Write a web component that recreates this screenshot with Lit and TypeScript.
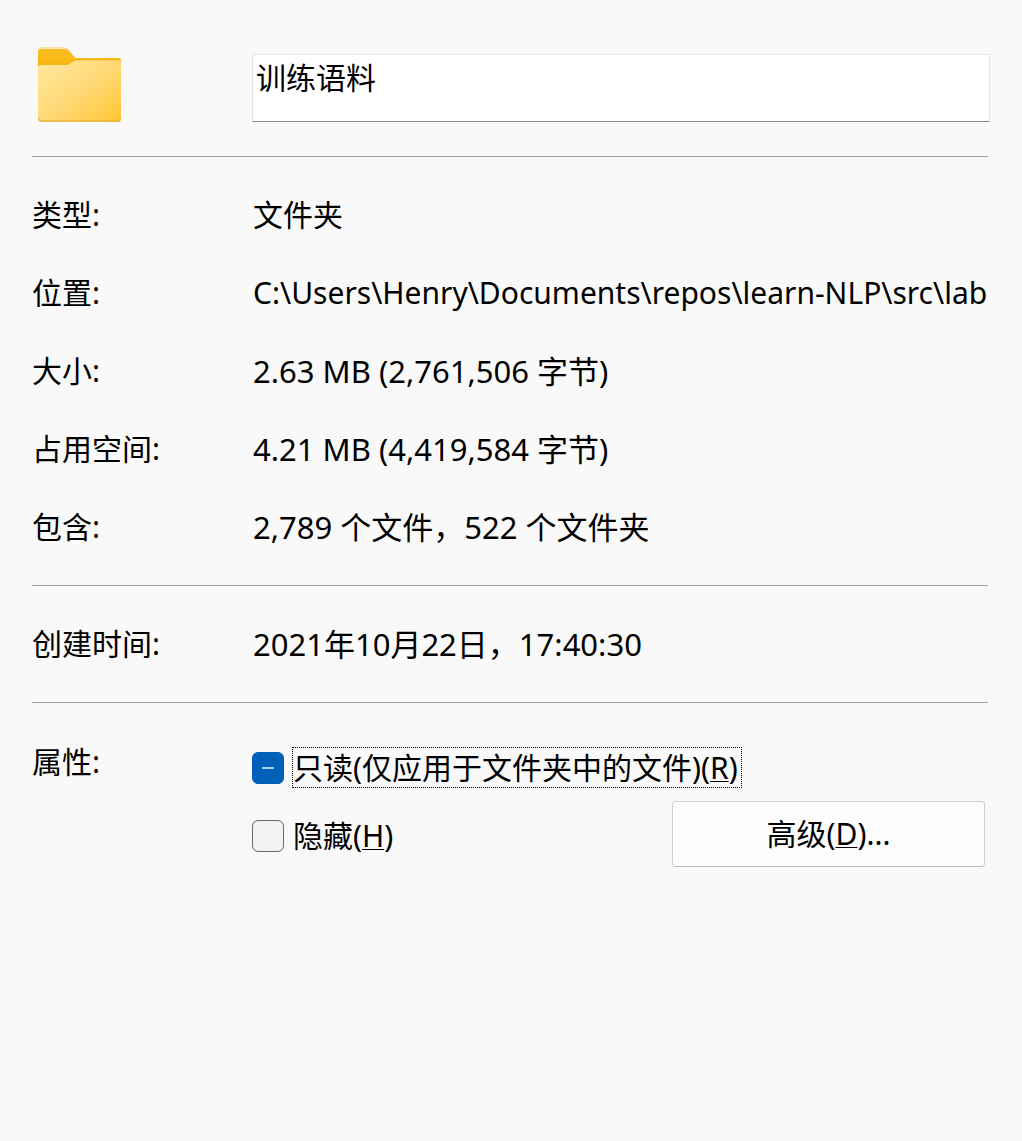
import { LitElement, html, css, svg } from "lit";
import { customElement, property, state } from "lit/decorators.js";
import { classMap } from "lit/directives/class-map.js";

interface Detail {
  label: string;
  value: string;
  numeric?: boolean;
}

const SUMMARY: Detail[] = [
  { label: "类型:", value: "文件夹" },
  { label: "位置:", value: "C:\\Users\\Henry\\Documents\\repos\\learn-NLP\\src\\lab" },
  { label: "大小:", value: "2.63 MB (2,761,506 字节)", numeric: true },
  { label: "占用空间:", value: "4.21 MB (4,419,584 字节)", numeric: true },
  { label: "包含:", value: "2,789 个文件，522 个文件夹", numeric: true },
];

const TIMES: Detail[] = [
  { label: "创建时间:", value: "2021年10月22日，17:40:30", numeric: true },
];

@customElement("folder-icon")
class FolderIcon extends LitElement {
  static styles = css`
    :host {
      display: block;
    }
    .icon {
      display: block;
      width: 84px;
      height: 75px;
    }
  `;

  render() {
    return html`
      <svg class="icon" viewBox="0 0 84 75" aria-hidden="true">
        ${svg`
          <defs>
            <linearGradient id="front" x1="0" y1="0" x2="1" y2="1">
              <stop offset="0" stop-color="#ffe8a0" />
              <stop offset="0.5" stop-color="#ffd976" />
              <stop offset="1" stop-color="#ffc734" />
            </linearGradient>
            <linearGradient id="tab" x1="0" y1="0" x2="0" y2="1">
              <stop offset="0" stop-color="#fbbc20" />
              <stop offset="0.5" stop-color="#f8b816" />
              <stop offset="0.7" stop-color="#e3a412" />
            </linearGradient>
          </defs>
          <path d="M0 4Q0 0 3 0H25Q28 0 30 2L38 11H80Q83 11 83 14V30H0Z" fill="#f7e2b0" />
          <path d="M0 5Q0 2 3 2H25Q28 2 30 3L37 11H80Q83 11 83 14V30H0Z" fill="url(#tab)" />
          <path d="M0 21Q0 18 3 18H27Q31 18 34 15.500Q36 13 40 13H80Q83 13 83 16V72Q83 75 80 75H3Q0 75 0 72Z" fill="url(#front)" />
          <path d="M38 13.500H80Q82 13.500 82.500 16" fill="none" stroke="#fccb58" />
          <path d="M0.500 71Q1 74 3 74.200H80Q82 74 82.500 71" fill="none" stroke="#e5b03a" stroke-width="1.200" />
        `}
      </svg>
    `;
  }
}

@customElement("detail-list")
class DetailList extends LitElement {
  @property({ attribute: false }) items: Detail[] = [];

  static styles = css`
    :host {
      display: block;
    }
    .list {
      margin: 0;
    }
    .row {
      display: grid;
      grid-template-columns: 220px minmax(0, 1fr);
      align-items: center;
      height: 78px;
      line-height: 40px;
    }
    .value {
      margin: 0;
      padding-left: 1px;
      white-space: nowrap;
      overflow: hidden;
    }
    .numeric {
      font-size: 31px;
    }
  `;

  render() {
    return html`
      <dl class="list">
        ${this.items.map(
          (item) => html`
            <div class="row">
              <dt>${item.label}</dt>
              <dd class=${classMap({ value: true, numeric: !!item.numeric })}>${item.value}</dd>
            </div>
          `
        )}
      </dl>
    `;
  }
}

@customElement("app-root")
class AppRoot extends LitElement {
  @state() private folderName = "训练语料";

  static styles = css`
    :host {
      display: block;
      box-sizing: border-box;
      min-height: 100vh;
      padding: 54px 32px 32px;
      background: #f9f9f9;
      color: #000;
      font-family: "Noto Sans", "Noto Sans CJK SC", sans-serif;
      font-size: 30px;
      line-height: 40px;
    }
    .header {
      display: grid;
      grid-template-columns: 220px minmax(0, 1fr);
      align-items: end;
      margin-top: -7px;
      padding-bottom: 34px;
    }
    .icon {
      padding-left: 6px;
    }
    .name {
      box-sizing: border-box;
      width: 100%;
      height: 68px;
      margin: 0;
      padding: 0 3px 24px;
      border: 1px solid #e5e5e5;
      border-bottom-color: #868686;
      border-radius: 1px;
      outline: none;
      background: #fff;
      color: inherit;
      font: inherit;
    }
    .rule {
      height: 1px;
      margin: 0 2px 0 0;
      border: 0;
      background: #a0a0a0;
    }
    .section {
      padding: 19px 0;
    }
    .attributes {
      display: grid;
      grid-template-columns: 220px minmax(0, 1fr);
      padding-top: 20px;
    }
    .caption {
      line-height: 78px;
    }
    .options {
      padding-top: 12px;
    }
    .option {
      display: flex;
      align-items: center;
      gap: 8px;
      height: 66px;
    }
    .actions {
      display: flex;
      justify-content: space-between;
      align-items: start;
      padding-right: 5px;
    }
    .actions .option {
      height: 70px;
    }
    .box {
      appearance: none;
      display: grid;
      place-items: center;
      flex: none;
      box-sizing: border-box;
      width: 32px;
      height: 32px;
      margin: 0;
      border: 1px solid #6b6b6b;
      border-radius: 6px;
      background: #f3f3f3;
    }
    .box:indeterminate,
    .box:checked {
      border-color: #005fb8;
      background: #005fb8;
    }
    .box:indeterminate::before {
      content: "";
      width: 12px;
      height: 2px;
      background: #a9cbe8;
    }
    .text {
      margin-bottom: 2px;
      padding-right: 3px;
      border: 1px solid transparent;
      line-height: 39px;
      white-space: nowrap;
    }
    .focused {
      border: 1px dotted #000;
    }
    .key {
      text-decoration: underline;
      text-decoration-thickness: 1px;
      text-underline-offset: 2px;
    }
    .advanced {
      box-sizing: border-box;
      width: 313px;
      height: 66px;
      padding: 0;
      border: 1px solid #d0d0d0;
      border-bottom-color: #bababa;
      border-radius: 4px;
      background: #fdfdfd;
      color: inherit;
      font: inherit;
    }
  `;

  private rename(event: Event) {
    this.folderName = (event.target as HTMLInputElement).value;
  }

  render() {
    return html`
      <header class="header">
        <folder-icon class="icon"></folder-icon>
        <input class="name" type="text" aria-label="名称" .value=${this.folderName} @input=${this.rename} />
      </header>
      <hr class="rule" />
      <detail-list class="section" .items=${SUMMARY}></detail-list>
      <hr class="rule" />
      <detail-list class="section" .items=${TIMES}></detail-list>
      <hr class="rule" />
      <div class="attributes" role="group" aria-labelledby="attributes">
        <div class="caption" id="attributes">属性:</div>
        <div class="options">
          <div class="option">
            <input class="box" type="checkbox" id="readonly" .indeterminate=${true} />
            <label class="text focused" for="readonly">只读(仅应用于文件夹中的文件)(<span class="key">R</span>)</label>
          </div>
          <div class="actions">
            <div class="option">
              <input class="box" type="checkbox" id="hidden" />
              <label class="text" for="hidden">隐藏(<span class="key">H</span>)</label>
            </div>
            <button class="advanced" type="button">高级(<span class="key">D</span>)...</button>
          </div>
        </div>
      </div>
    `;
  }
}
